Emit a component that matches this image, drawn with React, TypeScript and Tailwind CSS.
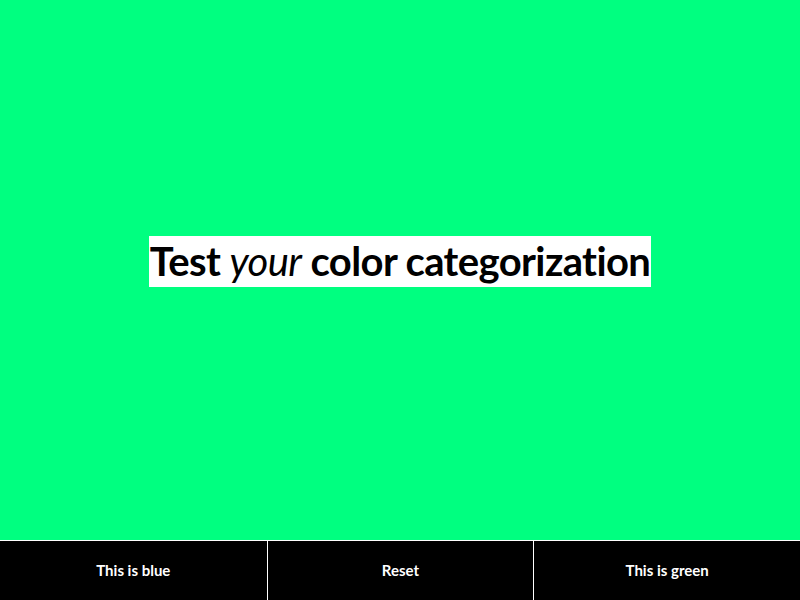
export default function App() {
  const font = { fontFamily: "Lato, 'Noto Sans', sans-serif" }
  return (
    <div className="flex h-screen flex-col bg-[#00ff80]" style={font}>
      <main className="flex flex-1 items-center justify-center pb-[17px]">
        <h1 className="bg-white px-px text-[40px] font-bold leading-[51px] tracking-[-0.6px] text-black">
          Test <em className="font-normal">your</em> color categorization
        </h1>
      </main>
      <div className="grid h-[60px] grid-cols-3 border-t border-white bg-black text-[15px] font-bold text-white">
        <button className="flex items-center justify-center">This is blue</button>
        <button className="flex items-center justify-center border-l border-white">Reset</button>
        <button className="flex items-center justify-center border-l border-white">This is green</button>
      </div>
    </div>
  )
}
